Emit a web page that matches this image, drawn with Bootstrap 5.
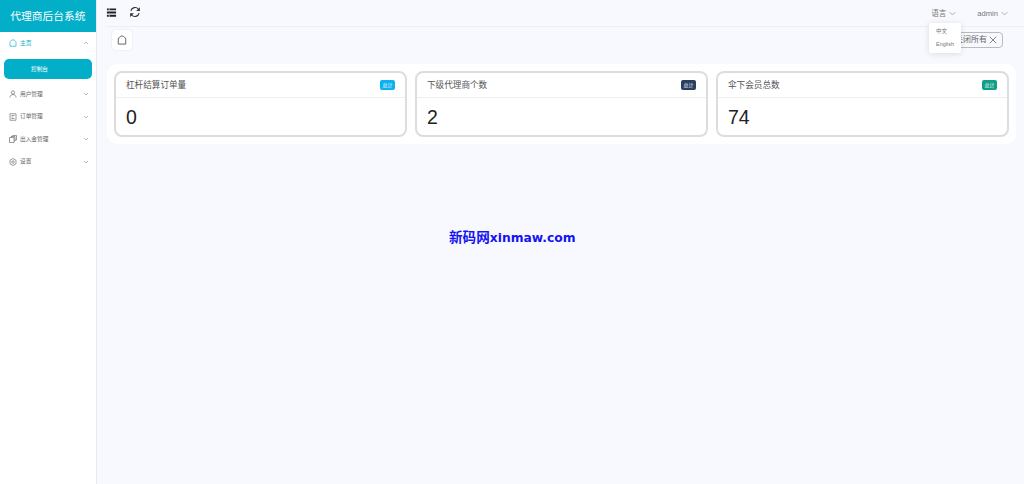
<!DOCTYPE html>
<html lang="zh">
<head>
<meta charset="utf-8">
<title>代理商后台系统</title>
<link rel="stylesheet" href="https://cdn.jsdelivr.net/npm/bootstrap@5.3.0/dist/css/bootstrap.min.css">
<style>
html,body{height:100%;overflow:hidden}
body{font-family:"Liberation Sans","Noto Sans CJK SC",sans-serif;background:#f8f9ff;color:#555;position:relative}
.shell{height:484px}
.side{width:97px;flex:none;background:#fff;border-right:1px solid #e8eaf2}
.brand{height:32px;background:#03afc8;color:#fff;font-size:10.75px;line-height:32px;text-align:center}
.menu-row{height:22.5px;padding:0 8px 0 9px;font-size:5.7px;color:#666;gap:3px}
.menu-row svg.ic{width:8px;height:8px;flex:none}
.menu-row.on{color:#03afc8;height:22px}
.chev{width:6px;height:4px;margin-left:auto;margin-right:-1px;flex:none}
.sub-on{width:88px;height:20px;margin:5px 5px 4px 4px;background:#03afc8;color:#fff;font-size:5.7px;border-radius:5px;border:0;padding:0 17px 0 0}
.main-col{min-width:0}
.topbar{height:27px;margin-left:9px;border-bottom:1px solid #eceef4;padding:0 16px 0 0}
.tbtn{width:11px;height:11px;flex:none}
.tbtn-r{width:12px;height:12px}
.top-l{gap:12px;margin-top:-2px}
.top-r{font-size:7.6px;color:#777;margin-left:auto;gap:21px;margin-top:1px}
.top-r span{gap:3px}
.top-r svg{width:7px;height:5px}
.tabs{height:37px;padding:2px 21px 0 14px}
.home-b{width:22px;height:22px;background:#fff;border:1px solid #f0f1f6;border-radius:5px}
.close-b{height:16px;margin-left:auto;width:64px;margin-top:3px;border:1px solid #bbb;border-radius:4px;font-size:8px;color:#666;padding:0 5px 0 0;background:transparent;justify-content:flex-end;gap:2px}
.panel{margin:0 8px 0 10px;padding:7px;height:80px;background:#fff;border-radius:10px;gap:8px}
.stat{flex:1 1 0;height:66px;border:2px solid #ddd;border-radius:8px;background:#fff;min-width:0}
.stat-h{height:25px;padding:0 10px;border-bottom:1px solid #efefef;font-size:8.6px;color:#555}
.tag{margin-left:auto;width:15px;height:10px;border-radius:2px;color:#fff;font-size:5px;line-height:10px;text-align:center}
.t-a{background:#0db1ee}.t-b{background:#2a3f5f}.t-c{background:#0f9f87}
.stat-n{padding:7px 10px 0;font-size:19.5px;line-height:24px;color:#222}
.lang-menu{position:absolute;left:929px;top:23px;width:32px;height:30px;background:#fff;border-radius:2px;box-shadow:0 1px 6px rgba(0,0,0,.12);font-size:5.5px;color:#777;padding:2px 0 0 7px;line-height:13px;z-index:5}
.mark-w{position:absolute;left:449px;top:229px;font-size:13.6px;line-height:17px;font-weight:700;color:#1414f0;font-family:"DejaVu Sans","Noto Sans CJK SC",sans-serif;white-space:nowrap}
.mark-lat{font-size:12.3px}
</style>
</head>
<body>
<div class="d-flex shell">
  <aside class="side">
    <div class="brand">代理商后台系统</div>
    <div class="menu-row on d-flex align-items-center"><svg class="ic" viewBox="0 0 16 16" fill="none" stroke="#03afc8" stroke-width="1.3"><path d="M2 14.500V6.500C3 4 5 2 8 1.500 11 2 13 4 14 6.500v8z"/></svg>主页<svg class="chev" viewBox="0 0 12 8" fill="none" stroke="#999" stroke-width="1.3"><path d="M2 6l4-4 4 4"/></svg></div>
    <button type="button" class="sub-on d-block">控制台</button>
    <div class="menu-row d-flex align-items-center"><svg class="ic" viewBox="0 0 16 16" fill="none" stroke="#666" stroke-width="1.300"><circle cx="8" cy="5" r="3.300"/><path d="M2 15c0-4 3-6 6-6s6 2 6 6"/></svg>用户管理<svg class="chev" viewBox="0 0 12 8" fill="none" stroke="#999" stroke-width="1.3"><path d="M2 2l4 4 4-4"/></svg></div>
    <div class="menu-row d-flex align-items-center"><svg class="ic" viewBox="0 0 16 16" fill="none" stroke="#666" stroke-width="1.300"><path d="M2 1.500h12v13H2zM5 5h6M5 8h3M5 11h6"/></svg>订单管理<svg class="chev" viewBox="0 0 12 8" fill="none" stroke="#999" stroke-width="1.3"><path d="M2 2l4 4 4-4"/></svg></div>
    <div class="menu-row d-flex align-items-center"><svg class="ic" viewBox="0 0 16 16" fill="none" stroke="#666" stroke-width="1.300"><path d="M1 5h9v10H1zM4 5V3h8v9h-2M7 3V1h8v9h-3"/></svg>出入金管理<svg class="chev" viewBox="0 0 12 8" fill="none" stroke="#999" stroke-width="1.3"><path d="M2 2l4 4 4-4"/></svg></div>
    <div class="menu-row d-flex align-items-center"><svg class="ic" viewBox="0 0 16 16" fill="none" stroke="#666" stroke-width="1.300"><path d="M8 1l6 3.500v7L8 15l-6-3.500v-7z"/><circle cx="8" cy="8" r="2.500"/></svg>设置<svg class="chev" viewBox="0 0 12 8" fill="none" stroke="#999" stroke-width="1.3"><path d="M2 2l4 4 4-4"/></svg></div>
  </aside>
  <div class="main-col flex-grow-1">
    <header class="topbar d-flex align-items-center">
      <div class="top-l d-flex align-items-center">
        <svg class="tbtn" viewBox="0 0 12 12" fill="#222"><path d="M1 1.500h10v2H1zM1 5h10v2H1zM1 8.500h10v2H1z"/><path fill="#fff" d="M3 1.500h.8v2H3zM3 8.500h.8v2H3z"/></svg>
        <svg class="tbtn tbtn-r" viewBox="0 0 16 16" fill="none" stroke="#333" stroke-width="1.500"><path d="M2.500 6.500A5.800 5.800 0 0 1 12.500 4M13.500 9.500A5.800 5.800 0 0 1 3.500 12"/><path fill="#333" stroke="none" d="M14.500 1.500v5h-5zM1.500 14.500v-5h5z"/></svg>
      </div>
      <div class="top-r d-flex align-items-center">
        <span class="d-flex align-items-center">语言<svg viewBox="0 0 12 8" fill="none" stroke="#888" stroke-width="1.100"><path d="M1 1.500l5 5 5-5"/></svg></span>
        <span class="d-flex align-items-center">admin<svg viewBox="0 0 12 8" fill="none" stroke="#888" stroke-width="1.100"><path d="M1 1.500l5 5 5-5"/></svg></span>
      </div>
    </header>
    <div class="tabs d-flex align-items-start">
      <div class="home-b d-flex align-items-center justify-content-center"><svg width="10" height="10" viewBox="0 0 16 16" fill="none" stroke="#555" stroke-width="1.400"><path d="M2 14.500V6.500C3 4 5 2 8 1.500 11 2 13 4 14 6.500v8z"/></svg></div>
      <button type="button" class="close-b d-flex align-items-center">关闭所有<svg width="8" height="8" viewBox="0 0 10 10" fill="none" stroke="#666" stroke-width="1"><path d="M1 1l8 8M9 1l-8 8"/></svg></button>
    </div>
    <section class="panel d-flex">
      <div class="stat"><div class="stat-h d-flex align-items-center">杠杆结算订单量<span class="tag t-a">总计</span></div><div class="stat-n">0</div></div>
      <div class="stat"><div class="stat-h d-flex align-items-center">下级代理商个数<span class="tag t-b">总计</span></div><div class="stat-n">2</div></div>
      <div class="stat"><div class="stat-h d-flex align-items-center">伞下会员总数<span class="tag t-c">总计</span></div><div class="stat-n">74</div></div>
    </section>
  </div>
</div>
<div class="lang-menu"><div>中文</div><div>English</div></div>
<div class="mark-w">新码网<span class="mark-lat">xinmaw.com</span></div>
<script src="https://cdn.jsdelivr.net/npm/bootstrap@5.3.0/dist/js/bootstrap.bundle.min.js"></script>
</body>
</html>
